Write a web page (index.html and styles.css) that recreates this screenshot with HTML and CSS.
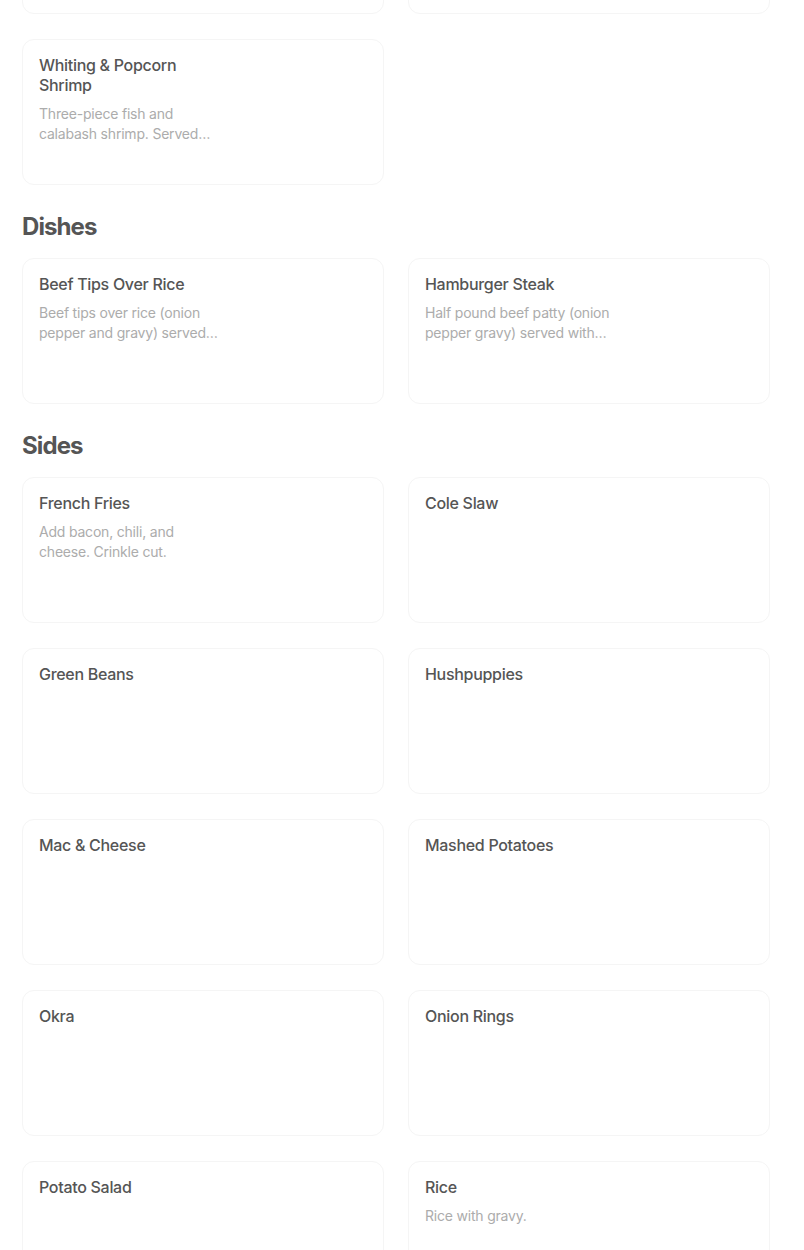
FILE: index.html
```html
<!DOCTYPE html>
<html lang="en">
<head>
    <meta charset="UTF-8">
    <meta name="viewport" content="width=device-width, initial-scale=1.0">
    <title>Menu</title>
    <link rel="stylesheet" href="styles.css">
</head>
<body>
    <div class="menu">
        <div class="grid scrolled">
            <div class="card"></div>
            <div class="card"></div>
            <div class="card">
                <div class="info">
                    <h3>Whiting &amp; Popcorn Shrimp</h3>
                    <p>Three-piece fish and calabash shrimp. Served with fries and hushpuppies.</p>
                </div>
            </div>
        </div>

        <h2>Dishes</h2>
        <div class="grid">
            <div class="card">
                <div class="info">
                    <h3>Beef Tips Over Rice</h3>
                    <p>Beef tips over rice (onion pepper and gravy) served with two sides.</p>
                </div>
            </div>
            <div class="card">
                <div class="info">
                    <h3>Hamburger Steak</h3>
                    <p>Half pound beef patty (onion pepper gravy) served with two sides.</p>
                </div>
            </div>
        </div>

        <h2>Sides</h2>
        <div class="grid">
            <div class="card">
                <div class="info">
                    <h3>French Fries</h3>
                    <p>Add bacon, chili, and cheese. Crinkle cut.</p>
                </div>
            </div>
            <div class="card">
                <div class="info"><h3>Cole Slaw</h3></div>
            </div>
            <div class="card">
                <div class="info"><h3>Green Beans</h3></div>
            </div>
            <div class="card">
                <div class="info"><h3>Hushpuppies</h3></div>
            </div>
            <div class="card">
                <div class="info"><h3>Mac &amp; Cheese</h3></div>
            </div>
            <div class="card">
                <div class="info"><h3>Mashed Potatoes</h3></div>
            </div>
            <div class="card">
                <div class="info"><h3>Okra</h3></div>
            </div>
            <div class="card">
                <div class="info"><h3>Onion Rings</h3></div>
            </div>
            <div class="card">
                <div class="info"><h3>Potato Salad</h3></div>
            </div>
            <div class="card">
                <div class="info">
                    <h3>Rice</h3>
                    <p>Rice with gravy.</p>
                </div>
            </div>
        </div>
    </div>
</body>
</html>
```

FILE: styles.css
```css
body {
    font-family: Inter, "Noto Sans", sans-serif;
    background: white;
    margin: 0;
    padding: 0;
}
.menu {
    padding: 0 34px 40px 22px;
}
.grid {
    display: grid;
    grid-template-columns: 362px 362px;
    column-gap: 24px;
    row-gap: 25px;
}
.scrolled {
    margin-top: -132px;
}
h2 {
    color: #555555;
    font-size: 24px;
    font-weight: 700;
    line-height: 32px;
    letter-spacing: -0.9px;
    margin: 26px 0 15px;
}
.card {
    box-sizing: border-box;
    height: 146px;
    padding: 15px 16px;
    border: 1px solid #f5f5f5;
    border-radius: 12px;
    background: white;
}
.info {
    max-width: 188px;
}
h3 {
    color: #555555;
    font-size: 16px;
    font-weight: 500;
    line-height: 20px;
    letter-spacing: -0.3px;
    margin: 0;
}
p {
    color: #acacac;
    font-size: 14px;
    line-height: 20px;
    letter-spacing: -0.2px;
    margin: 9px 0 0;
    display: -webkit-box;
    -webkit-line-clamp: 2;
    -webkit-box-orient: vertical;
    overflow: hidden;
}
```
